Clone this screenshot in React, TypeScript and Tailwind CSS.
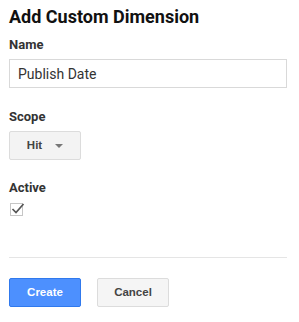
export default function App() {
  return (
    <div className="w-[299px] h-[322px] bg-white px-[9px] pt-[5px] font-['Roboto',Arial,sans-serif] text-[#333]">
      <h1 className="text-[18px] leading-[24px] font-bold text-[#111]">Add Custom Dimension</h1>

      <label className="mt-[8px] block text-[13px] leading-[16px] font-bold text-[#333]">Name</label>
      <input
        readOnly
        value="Publish Date"
        className="mt-[6px] block h-[29px] w-[278px] border border-[#d9d9d9] px-[8px] text-[14px] text-[#333] outline-none"
      />

      <label className="mt-[21px] block text-[13px] leading-[16px] font-bold text-[#333]">Scope</label>
      <button className="mt-[6px] flex h-[29px] w-[72px] items-center justify-center gap-[13px] rounded-[2px] border border-[#dcdcdc] bg-[#f3f3f3] font-['Liberation_Sans',Arial,sans-serif] text-[11.5px] font-bold text-[#444]">
        <span>Hit</span>
        <span className="h-0 w-0 border-x-[4px] border-t-[4px] border-x-transparent border-t-[#777]" />
      </button>

      <label className="mt-[20px] block text-[13px] leading-[16px] font-bold text-[#333]">Active</label>
      <div className="relative mt-[7px] ml-px h-[13px] w-[13px] border border-[#c6c6c6] bg-white">
        <svg width="14" height="14" viewBox="0 0 14 14" className="absolute -top-[3px] left-0">
          <path d="M1.5 8 L5 11.5 L12.5 3" fill="none" stroke="#555" strokeWidth="1.7" />
        </svg>
      </div>

      <div className="mt-[41px] h-px w-[278px] bg-[#e5e5e5]" />

      <div className="mt-[20px] flex gap-[16px] font-['Liberation_Sans',Arial,sans-serif] text-[11.5px] font-bold">
        <button className="h-[29px] w-[72px] rounded-[2px] border border-[#3079ed] bg-[#4d90fe] text-white">Create</button>
        <button className="h-[29px] w-[72px] rounded-[2px] border border-[#dcdcdc] bg-[#f5f5f5] text-[#444]">Cancel</button>
      </div>
    </div>
  );
}
